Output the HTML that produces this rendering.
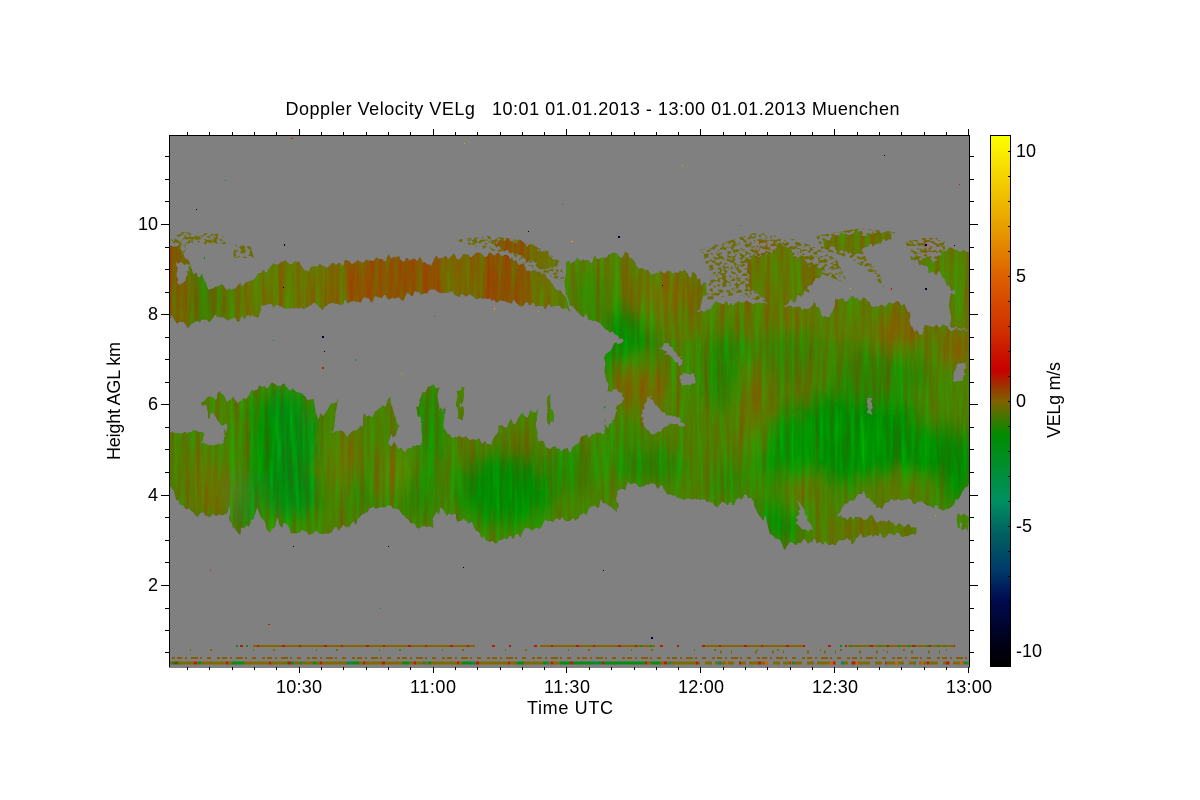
<!DOCTYPE html>
<html><head><meta charset="utf-8"><style>
html,body{margin:0;padding:0;background:#fff;width:1200px;height:800px;overflow:hidden}
svg{display:block}
text{font-family:"Liberation Sans",sans-serif;fill:#000;font-size:18px;white-space:pre}
</style></head><body>
<svg width="1200" height="800" viewBox="0 0 1200 800" xmlns="http://www.w3.org/2000/svg">
<defs>
<linearGradient id="cb" gradientUnits="userSpaceOnUse" x1="0" y1="135" x2="0" y2="666">
<stop offset="0" stop-color="#ffff00"/><stop offset=".171" stop-color="#e8a000"/><stop offset=".266" stop-color="#dd6000"/><stop offset=".367" stop-color="#d03000"/><stop offset=".443" stop-color="#c80000"/><stop offset=".471" stop-color="#a03000"/><stop offset=".501" stop-color="#806000"/><stop offset=".565" stop-color="#008c00"/><stop offset=".689" stop-color="#009060"/><stop offset=".751" stop-color="#006060"/><stop offset=".819" stop-color="#003a6a"/><stop offset=".876" stop-color="#000a50"/><stop offset=".970" stop-color="#000010"/><stop offset="1" stop-color="#000"/>
</linearGradient>
<linearGradient id="up" gradientUnits="userSpaceOnUse" x1="169" y1="0" x2="570" y2="0">
<stop offset="0" stop-color="#8a4c00"/><stop offset=".04" stop-color="#6a6e00"/><stop offset=".08" stop-color="#3f8000"/><stop offset=".2" stop-color="#687400"/><stop offset=".35" stop-color="#6a7400"/><stop offset=".5" stop-color="#855a00"/><stop offset=".6" stop-color="#8a5200"/><stop offset=".72" stop-color="#7c6400"/><stop offset=".85" stop-color="#875200"/><stop offset=".96" stop-color="#6a7400"/><stop offset="1" stop-color="#4f7e00"/>
</linearGradient>
<filter id="b" x="-50%" y="-50%" width="200%" height="200%"><feGaussianBlur stdDeviation="10"/></filter>
<filter id="f" filterUnits="userSpaceOnUse" x="169" y="135" width="801" height="531" color-interpolation-filters="sRGB">
<feTurbulence type="fractalNoise" baseFrequency="0.16 0.05" numOctaves="2" seed="3" result="j"/>
<feDisplacementMap in="SourceGraphic" in2="j" scale="13" xChannelSelector="R" yChannelSelector="G" result="d"/>
<feTurbulence type="fractalNoise" baseFrequency="0.2 0.012" numOctaves="4" seed="8"/>
<feColorMatrix values="1 0 0 0 0 -1 0 0 0 1 0 0 0 0 .5 0 0 0 0 1" result="n"/>
<feComposite in="d" in2="n" operator="arithmetic" k1="0" k2="1" k3=".36" k4="-.18" result="s"/>
<feComposite in="s" in2="d" operator="in"/>
</filter>
<filter id="g" filterUnits="userSpaceOnUse" x="169" y="135" width="801" height="531" color-interpolation-filters="sRGB">
<feTurbulence type="fractalNoise" baseFrequency="0.3 0.3" numOctaves="1" seed="5" result="j"/>
<feDisplacementMap in="SourceGraphic" in2="j" scale="6" xChannelSelector="R" yChannelSelector="G"/>
</filter>
<filter id="w" filterUnits="userSpaceOnUse" x="169" y="135" width="801" height="531" color-interpolation-filters="sRGB">
<feTurbulence type="fractalNoise" baseFrequency="0.22 0.3" numOctaves="3" seed="11"/>
<feColorMatrix values="0 0 0 0 0 0 0 0 0 0 0 0 0 0 0 16 0 0 0 -8.2" result="m"/>
<feComposite in="SourceGraphic" in2="m" operator="in"/>
</filter>
<clipPath id="pl"><rect x="169" y="135" width="801" height="531"/></clipPath>
<clipPath id="c">
<path d="M165 243L180 250 190 263 203 280 208 288 233 287 253 280 260 270 287 262 298 262 302 270 337 263 360 262 387 258 423 260 430 265 433 258 507 253 515 262 527 270 543 273 557 287 566 300 570 308 550 308 510 302 480 298 443 292 423 293 400 298 373 298 353 302 333 303 303 308 260 305 257 317 243 317 238 322 227 317 203 320 187 328 170 317 165 315Z"/>
<path d="M165 435L170 435 193 430 203 432 203 445 217 440 223 443 227 427 213 418 203 400 220 395 237 402 260 387 283 385 313 400 317 420 340 398 330 433 353 433 373 410 390 400 398 427 390 443 407 452 420 445 420 390 437 387 447 433 467 438 490 443 500 427 513 420 523 417 537 412 537 437 550 447 560 447 570 452 580 437 603 433 607 383 603 358 613 347 623 342 613 333 587 317 573 307 566 295 566 262 590 260 603 257 627 253 642 270 660 275 687 272 702 280 707 293 697 315 720 303 783 303 787 308 817 305 827 317 833 300 860 298 880 305 903 303 917 335 923 328 947 325 960 330 975 328 975 483 970 483 953 503 937 510 923 503 903 499 890 500 877 507 863 492 843 507 837 517 867 518 913 528 913 535 887 535 847 540 830 543 803 540 787 548 777 540 767 530 758 510 747 495 723 505 703 500 680 498 660 488 630 485 617 493 615 512 603 500 588 513 570 522 560 517 537 527 513 537 493 542 483 540 470 523 447 515 437 507 432 527 417 528 397 507 373 507 347 528 317 532 290 532 280 520 270 532 257 508 243 533 232 530 228 507 220 515 200 517 180 505 170 487 165 480Z"/>
<path d="M457 388L463 388 463 420 457 420ZM546 395L550 395 551 423 547 423ZM960 515L970 517 970 530 960 527Z"/>
<path d="M913 257L937 260 943 247 950 243 975 250 975 328 957 328 947 307 953 293 943 277 933 273Z"/>
<path d="M745 262L780 245 800 258 825 272 810 285 790 305 770 305 750 285ZM822 240L860 233 890 234 888 240 868 246 858 252 840 250 825 248ZM492 240L515 240 545 252 558 264 545 268 525 258 508 250Z"/>
</clipPath>
</defs>
<rect width="1200" height="800" fill="#fff"/>
<rect x="169" y="135" width="801" height="531" fill="#808080"/>

<g clip-path="url(#pl)">
<!-- wispy parts -->
<g filter="url(#w)">
<path fill="#6d6c00" d="M170 240L182 232 222 234 226 244 190 244 180 258 172 262ZM233 245L250 245 254 258 234 258ZM455 240L490 236 520 240 545 250 560 262 565 282 545 275 525 264 510 254 480 248ZM700 250L757 232 797 240 835 256 848 284 817 272 810 292 790 302 763 302 743 296 725 296 707 303 710 273ZM816 236L860 228 895 232 892 240 870 245 863 252 880 275 884 288 867 270 853 260 838 254 822 250ZM905 240L945 240 945 262 912 262Z"/>
<path fill="#7c6000" d="M752 240L775 240 775 290 752 290ZM920 238L938 238 935 262 925 262Z"/>
</g>
<!-- solid clouds -->
<g filter="url(#f)"><g clip-path="url(#c)">
<rect x="160" y="300" width="820" height="260" fill="#4c8000"/>
<rect x="160" y="240" width="420" height="90" fill="url(#up)"/>
<rect x="560" y="250" width="420" height="90" fill="#5b7a00"/>
<rect x="740" y="230" width="160" height="70" fill="#627600"/>
<g filter="url(#b)">
<ellipse cx="285" cy="450" rx="32" ry="62" fill="#008e08"/>
<ellipse cx="262" cy="440" rx="10" ry="45" fill="#008e04"/>
<ellipse cx="242" cy="500" rx="10" ry="28" fill="#008e20"/>
<ellipse cx="292" cy="492" rx="28" ry="26" fill="#008e10"/>
<ellipse cx="225" cy="490" rx="10" ry="20" fill="#6e6e00"/>
<ellipse cx="205" cy="485" rx="14" ry="35" fill="#716c00"/>
<ellipse cx="345" cy="460" rx="14" ry="30" fill="#766a00"/>
<ellipse cx="360" cy="490" rx="10" ry="25" fill="#288400"/>
<ellipse cx="430" cy="430" rx="8" ry="42" fill="#108a00"/>
<ellipse cx="420" cy="490" rx="20" ry="28" fill="#288600"/>
<ellipse cx="505" cy="490" rx="48" ry="34" fill="#058e00"/>
<ellipse cx="395" cy="470" rx="14" ry="20" fill="#707400"/>
<ellipse cx="570" cy="470" rx="25" ry="25" fill="#2c8600"/>
<ellipse cx="625" cy="350" rx="28" ry="45" fill="#108c00"/>
<ellipse cx="590" cy="300" rx="18" ry="30" fill="#3c8400"/>
<ellipse cx="665" cy="292" rx="24" ry="22" fill="#806400"/>
<ellipse cx="635" cy="385" rx="20" ry="22" fill="#7a6400"/>
<ellipse cx="655" cy="395" rx="12" ry="25" fill="#786800"/>
<ellipse cx="625" cy="440" rx="30" ry="20" fill="#408200"/>
<ellipse cx="650" cy="465" rx="40" ry="16" fill="#1c8a00"/>
<ellipse cx="725" cy="370" rx="20" ry="40" fill="#248600"/>
<ellipse cx="752" cy="405" rx="10" ry="40" fill="#786800"/>
<ellipse cx="700" cy="450" rx="16" ry="40" fill="#4c8000"/>
<ellipse cx="730" cy="480" rx="20" ry="20" fill="#2e8600"/>
<ellipse cx="790" cy="350" rx="30" ry="30" fill="#3a8200"/>
<ellipse cx="790" cy="318" rx="14" ry="12" fill="#786800"/>
<ellipse cx="860" cy="435" rx="60" ry="50" fill="#008e00"/>
<ellipse cx="790" cy="450" rx="30" ry="40" fill="#108c00"/>
<ellipse cx="945" cy="465" rx="34" ry="38" fill="#008e00"/>
<ellipse cx="900" cy="330" rx="22" ry="20" fill="#806200"/>
<ellipse cx="957" cy="350" rx="18" ry="20" fill="#826200"/>
<ellipse cx="880" cy="375" rx="50" ry="26" fill="#2e8400"/>
<ellipse cx="780" cy="520" rx="24" ry="26" fill="#088e00"/>
<ellipse cx="800" cy="492" rx="12" ry="16" fill="#706e00"/>
<ellipse cx="880" cy="528" rx="30" ry="8" fill="#806200"/>
<ellipse cx="835" cy="533" rx="18" ry="8" fill="#6c7000"/>
<ellipse cx="900" cy="490" rx="40" ry="10" fill="#5e7800"/>
</g>
</g></g>
<!-- gray holes -->
<g filter="url(#g)" fill="#808080">
<path d="M648 395L657 406 667 415 680 418 685 427 670 424 653 435 644 427 642 413ZM617 388L625 400 618 405 613 420 607 428 603 417 607 392ZM660 348L667 343 683 360 680 367 676 360ZM680 374L695 374 695 384 681 385ZM868 398L872 398 871 414 868 414ZM957 365L966 362 963 380 953 382ZM797 498L805 513 813 530 803 530 796 523 800 510ZM176 262L190 265 185 282 178 285ZM205 430L225 430 222 444 204 445Z"/>
</g>
</g>

<!-- bottom strips -->
<g clip-path="url(#pl)" shape-rendering="crispEdges" fill="none">
<path stroke="#7f6a00" stroke-width="3" d="M169 663H970"/>
<path stroke="#0a8a10" stroke-width="3" stroke-dasharray="7 19 3 31 12 43" d="M172 663H660"/>
<path stroke="#0a8a10" stroke-width="3" stroke-dasharray="22 5 60 4" d="M560 663H660"/>
<path stroke="#c01800" stroke-width="3" stroke-dasharray="2 17 3 29 2 41" d="M175 663H970"/>
<path stroke="#d06000" stroke-width="3" stroke-dasharray="3 23 2 37" d="M700 663H970"/>
<path stroke="#008860" stroke-width="3" stroke-dasharray="2 47 3 71" d="M300 663H970"/>
<path stroke="#808080" stroke-width="3" stroke-dasharray="5 7 3 19" d="M700 663H970"/>
<path stroke="#8a5c00" stroke-width="2" stroke-dasharray="3 2 5 3 2 4 7 2 2 5 4 6" d="M172 658H970"/>
<path stroke="#8a6400" stroke-width="2" d="M253 646H475M540 646H655M705 646H805M848 646H955"/>
<path stroke="#0a9010" stroke-width="2" stroke-dasharray="2 8 2 5 1 11" d="M236 646H253M640 646H655M840 646H955"/>
<path stroke="#b02000" stroke-width="2" stroke-dasharray="3 14 2 23" d="M240 646H955"/>
<path stroke="#7a6c00" stroke-width="3" stroke-dasharray="2 9 1 23 2 15" d="M720 652H960"/>
<path stroke="#7a6c00" stroke-width="2" stroke-dasharray="1 19 2 41" d="M190 650H960"/>
</g>

<!-- speckles -->
<g shape-rendering="crispEdges">
<path fill="#000030" d="M284 244h1v2h-1zM283 287h1v1h-1zM322 336h2v2h-2zM324 351h1v1h-1zM528 231h1v1h-1zM463 567h1v1h-1zM293 546h1v1h-1zM388 546h1v1h-1zM662 285h1v1h-1zM925 244h2v2h-2zM925 288h2v2h-2zM618 236h2v2h-2zM651 637h2v2h-2zM603 570h1v1h-1zM196 209h1v1h-1zM954 245h1v1h-1zM884 155h1v1h-1z"/>
<path fill="#c81800" d="M322 367h2v2h-2zM291 138h2v1h-2zM891 288h1v2h-1zM508 256h1v1h-1zM959 184h1v1h-1zM210 570h1v1h-1zM268 624h2v1h-2z"/>
<path fill="#e8a000" d="M401 373h1v1h-1zM571 241h2v1h-2zM464 143h1v1h-1zM494 308h1v2h-1zM850 288h1v1h-1zM682 165h1v1h-1zM538 311h1v1h-1zM935 515h1v1h-1z"/>
<path fill="#0a9010" d="M204 257h1v2h-1zM273 340h1v1h-1zM355 359h1v2h-1zM434 316h1v1h-1zM562 204h1v1h-1zM380 608h1v1h-1zM225 180h1v1h-1zM740 225h1v1h-1z"/>
</g>

<!-- frame, ticks -->
<g fill="none" stroke="#000" shape-rendering="crispEdges">
<rect x="169.500" y="135.500" width="800" height="531.500"/>
<path d="M187.500 667v3M209.500 667v3M232.500 667v3M254.500 667v3M276.500 667v3M299.500 667v6M321.500 667v3M343.500 667v3M366.500 667v3M388.500 667v3M410.500 667v3M433.500 667v6M455.500 667v3M477.500 667v3M500.500 667v3M522.500 667v3M544.500 667v3M566.500 667v6M589.500 667v3M611.500 667v3M634.500 667v3M656.500 667v3M678.500 667v3M700.500 667v6M723.500 667v3M745.500 667v3M767.500 667v3M790.500 667v3M812.500 667v3M834.500 667v6M857.500 667v3M879.500 667v3M901.500 667v3M924.500 667v3M946.500 667v3M968.500 667v6"/>
<path d="M187.500 135v-3M209.500 135v-3M232.500 135v-3M254.500 135v-3M276.500 135v-3M299.500 135v-6M321.500 135v-3M343.500 135v-3M366.500 135v-3M388.500 135v-3M410.500 135v-3M433.500 135v-6M455.500 135v-3M477.500 135v-3M500.500 135v-3M522.500 135v-3M544.500 135v-3M566.500 135v-6M589.500 135v-3M611.500 135v-3M634.500 135v-3M656.500 135v-3M678.500 135v-3M700.500 135v-6M723.500 135v-3M745.500 135v-3M767.500 135v-3M790.500 135v-3M812.500 135v-3M834.500 135v-6M857.500 135v-3M879.500 135v-3M901.500 135v-3M924.500 135v-3M946.500 135v-3M968.500 135v-6"/>
<path d="M169 156.500h-4M169 179.500h-4M169 201.500h-4M169 224.500h-8M169 247.500h-4M169 269.500h-4M169 292.500h-4M169 314.500h-8M169 337.500h-4M169 359.500h-4M169 382.500h-4M169 404.500h-8M169 427.500h-4M169 449.500h-4M169 472.500h-4M169 495.500h-8M169 517.500h-4M169 540.500h-4M169 562.500h-4M169 585.500h-8M169 608.500h-4M169 630.500h-4M169 652.500h-4"/>
<path d="M970 156.500h4M970 179.500h4M970 201.500h4M970 224.500h8M970 247.500h4M970 269.500h4M970 292.500h4M970 314.500h8M970 337.500h4M970 359.500h4M970 382.500h4M970 404.500h8M970 427.500h4M970 449.500h4M970 472.500h4M970 495.500h8M970 517.500h4M970 540.500h4M970 562.500h4M970 585.500h8M970 608.500h4M970 630.500h4M970 652.500h4"/>
</g>

<!-- colorbar -->
<rect x="990" y="135" width="20" height="531" fill="url(#cb)" shape-rendering="crispEdges"/>
<g fill="none" stroke="#000" shape-rendering="crispEdges">
<rect x="990.500" y="135.500" width="20" height="531"/>
<path d="M1010 151.500h-2M1010 176.500h-2M1010 201.500h-2M1010 226.500h-2M1010 251.500h-2M1010 276.500h-2M1010 301.500h-2M1010 326.500h-2M1010 351.500h-2M1010 376.500h-2M1010 401.500h-2M1010 426.500h-2M1010 451.500h-2M1010 476.500h-2M1010 501.500h-2M1010 526.500h-2M1010 551.500h-2M1010 576.500h-2M1010 601.500h-2M1010 626.500h-2M1010 651.500h-2"/>
</g>

<!-- text -->
<text x="285.500" y="115" textLength="614" lengthAdjust="spacing">Doppler Velocity VELg   10:01 01.01.2013 - 13:00 01.01.2013 Muenchen</text>
<text x="276" y="693" textLength="46">10:30</text>
<text x="410" y="693" textLength="46">11:00</text>
<text x="544" y="693" textLength="46">11:30</text>
<text x="678" y="693" textLength="46">12:00</text>
<text x="812" y="693" textLength="46">12:30</text>
<text x="946" y="693" textLength="46">13:00</text>
<text x="527" y="714" textLength="86">Time UTC</text>
<text x="158" y="230" text-anchor="end">10</text>
<text x="158" y="320" text-anchor="end">8</text>
<text x="158" y="410" text-anchor="end">6</text>
<text x="158" y="501" text-anchor="end">4</text>
<text x="158" y="591" text-anchor="end">2</text>
<text transform="translate(120 460) rotate(-90)" textLength="118">Height AGL km</text>
<text x="1016" y="157">10</text>
<text x="1016" y="282">5</text>
<text x="1016" y="407">0</text>
<text x="1016" y="532">-5</text>
<text x="1016" y="657">-10</text>
<text transform="translate(1060 438) rotate(-90)" textLength="76">VELg m/s</text>
</svg>
</body></html>
